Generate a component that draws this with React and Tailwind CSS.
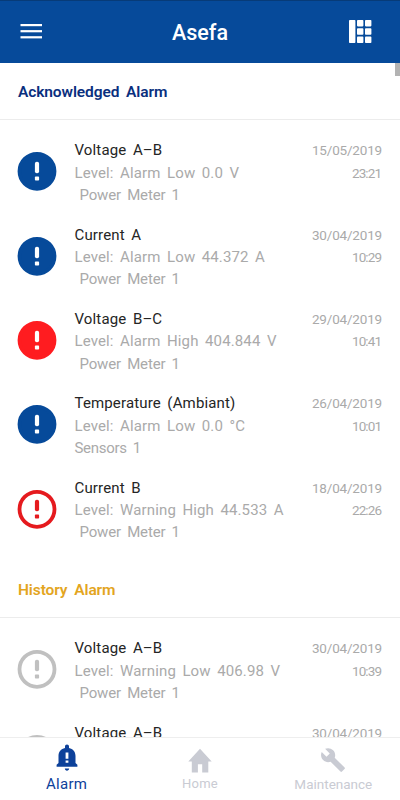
import React from 'react';

const acknowledged = [
  { title: 'Voltage A–B', level: 'Level: Alarm Low 0.0 V', source: 'Power Meter 1', date: '15/05/2019', time: '23:21', type: 'blue' },
  { title: 'Current A', level: 'Level: Alarm Low 44.372 A', source: 'Power Meter 1', date: '30/04/2019', time: '10:29', type: 'blue' },
  { title: 'Voltage B–C', level: 'Level: Alarm High 404.844 V', source: 'Power Meter 1', date: '29/04/2019', time: '10:41', type: 'red' },
  { title: 'Temperature (Ambiant)', level: 'Level: Alarm Low 0.0 °C', source: 'Sensors 1', date: '26/04/2019', time: '10:01', type: 'blue' },
  { title: 'Current B', level: 'Level: Warning High 44.533 A', source: 'Power Meter 1', date: '18/04/2019', time: '22:26', type: 'warning' },
];

const history = [
  { title: 'Voltage A–B', level: 'Level: Warning Low 406.98 V', source: 'Power Meter 1', date: '30/04/2019', time: '10:39', type: 'past' },
  { title: 'Voltage A–B', date: '30/04/2019', type: 'past' },
];

const iconColors = {
  blue: { ring: '#064a9a', fill: '#064a9a', mark: '#ffffff' },
  red: { ring: '#ff1c20', fill: '#ff1c20', mark: '#ffffff' },
  warning: { ring: '#e51a1e', fill: '#ffffff', mark: '#e51a1e' },
  past: { ring: '#c0c0c0', fill: '#ffffff', mark: '#c0c0c0' },
};

const AlarmIcon = ({ type }) => {
  const { ring, fill, mark } = iconColors[type];
  return (
    <svg width="40" height="40" viewBox="0 0 40 40" className="shrink-0">
      <circle cx="20" cy="20.3" r="17.5" fill={fill} stroke={ring} strokeWidth="3.8" />
      <rect x="17.9" y="10.8" width="4.2" height="11.4" rx="1.9" fill={mark} />
      <rect x="17.9" y="25.6" width="4.2" height="4" rx="0.8" fill={mark} />
    </svg>
  );
};

const SectionTitle = ({ color, children }) => (
  <div className="h-[57.5px] border-b border-[#ececec] px-[18px] pt-[17.5px]">
    <h2 className={`text-[15.5px] leading-6 font-semibold tracking-[-0.1px] [word-spacing:3px] ${color}`}>{children}</h2>
  </div>
);

const AlarmRow = ({ alarm }) => (
  <li className="flex h-[84.4px] pl-[17px] pr-[18px] pt-[10px]">
    <div className="pt-[12px]">
      <AlarmIcon type={alarm.type} />
    </div>
    <div className="ml-[17.5px] flex-1 whitespace-nowrap text-[15px] leading-[22.3px] text-[#aaaaaa] [word-spacing:2.6px]">
      <div className="tracking-[0.15px] text-[#252525]">{alarm.title}</div>
      <div className="tracking-[0.13px]">{alarm.level}</div>
      <div className={alarm.source === 'Sensors 1' ? 'tracking-[-0.3px]' : 'pl-[5px] tracking-[-0.15px]'}>{alarm.source}</div>
    </div>
    <div className="text-right text-[13.5px] leading-[22.3px] tracking-[-0.18px] text-[#aaaaaa]">
      <div>{alarm.date}</div>
      <div className="tracking-[-0.9px] pr-[0.9px]">{alarm.time}</div>
    </div>
  </li>
);

const AlarmList = ({ alarms }) => (
  <ul className="py-[9.25px]">
    {alarms.map((alarm, i) => (
      <AlarmRow key={i} alarm={alarm} />
    ))}
  </ul>
);

const Header = () => (
  <header className="flex h-[62.5px] shrink-0 items-center justify-between border-t border-[#073b78] bg-[#064a9a] pl-5 pr-[28px] text-white">
    <svg width="22" height="16" viewBox="0 0 22 16" fill="currentColor">
      <rect x="0.5" y="0" width="21.5" height="2.2" />
      <rect x="0.5" y="6.1" width="21.5" height="2.2" />
      <rect x="0.5" y="12.2" width="21.5" height="2.2" />
    </svg>
    <h1 className="ml-[9px] pt-[2px] text-[21.5px] leading-7 font-medium">Asefa</h1>
    <svg width="23" height="24" viewBox="0 0 23 24" fill="currentColor">
      <rect x="0" y="0" width="6.4" height="23" rx="0.8" />
      <rect x="8" y="0" width="6.4" height="6.4" rx="0.8" />
      <rect x="16" y="0" width="6.4" height="6.4" rx="0.8" />
      <rect x="8" y="8.3" width="6.4" height="6.4" rx="0.8" />
      <rect x="16" y="8.3" width="6.4" height="6.4" rx="0.8" />
      <rect x="8" y="16.6" width="6.4" height="6.4" rx="0.8" />
      <rect x="16" y="16.6" width="6.4" height="6.4" rx="0.8" />
    </svg>
  </header>
);

const BottomNav = () => (
  <nav className="grid h-[63px] shrink-0 grid-cols-3 border-t border-[#eeeeee] bg-white text-[#c9cbd3]">
    <div className="flex flex-col items-center pt-[6px] text-[#0d419a]">
      <svg width="22" height="28" viewBox="0 0 22 28">
        <path
          fill="currentColor"
          d="M11 .5c-1.2 0-2 .8-2 2V4C5 4.8 2.5 7.8 2.5 12v7L.6 20.8v2h20.8v-2L19.5 19v-7c0-4.2-2.5-7.2-6.5-8V2.5c0-1.2-.8-2-2-2zM8.8 24.6c.2 1.4 1 2.1 2.2 2.1s2-.7 2.2-2.1z"
        />
        <path fill="#ffffff" d="M9.6 8.5h2.8v6.2H9.6zM9.6 16.4h2.8v2.4H9.6z" />
      </svg>
      <span className="mt-[2px] text-[15px] leading-5 tracking-[0.3px]">Alarm</span>
    </div>
    <div className="flex flex-col items-center pt-[10px]">
      <svg width="24" height="25" viewBox="0 0 24 25">
        <path fill="currentColor" d="M12 .8L.3 13.5h3.5v11h6.1v-8.3h4.3v8.3h6.1v-11h3.4z" />
      </svg>
      <span className="mt-[1px] text-[13px] leading-[20px] tracking-[0.2px]">Home</span>
    </div>
    <div className="flex flex-col items-center pt-[9px]">
      <svg width="26" height="26" viewBox="0 0 24 24">
        <path
          fill="currentColor"
          d="M22.7 19l-9.1-9.1c.9-2.3.4-5-1.5-6.9-2-2-5-2.4-7.4-1.3L9 6 6 9 1.6 4.7C.4 7.1.9 10.1 2.9 12.1c1.9 1.9 4.6 2.4 6.9 1.5l9.1 9.1c.4.4 1 .4 1.4 0l2.3-2.3c.5-.4.5-1.1.1-1.4z"
        />
      </svg>
      <span className="mt-[1px] text-[13.5px] leading-[20px]">Maintenance</span>
    </div>
  </nav>
);

export default function App() {
  return (
    <div className="flex h-[800px] w-[400px] flex-col overflow-hidden bg-white font-['Roboto','Noto_Sans',sans-serif]">
      <Header />
      <main className="relative min-h-0 flex-1 overflow-hidden">
        <SectionTitle color="text-[#0a2f7e]">Acknowledged Alarm</SectionTitle>
        <AlarmList alarms={acknowledged} />
        <SectionTitle color="text-[#e3a51e]">History Alarm</SectionTitle>
        <AlarmList alarms={history} />
        <div className="absolute right-0 top-0 h-[13.5px] w-[5px] bg-[#b3b3b3]" />
      </main>
      <BottomNav />
    </div>
  );
}
